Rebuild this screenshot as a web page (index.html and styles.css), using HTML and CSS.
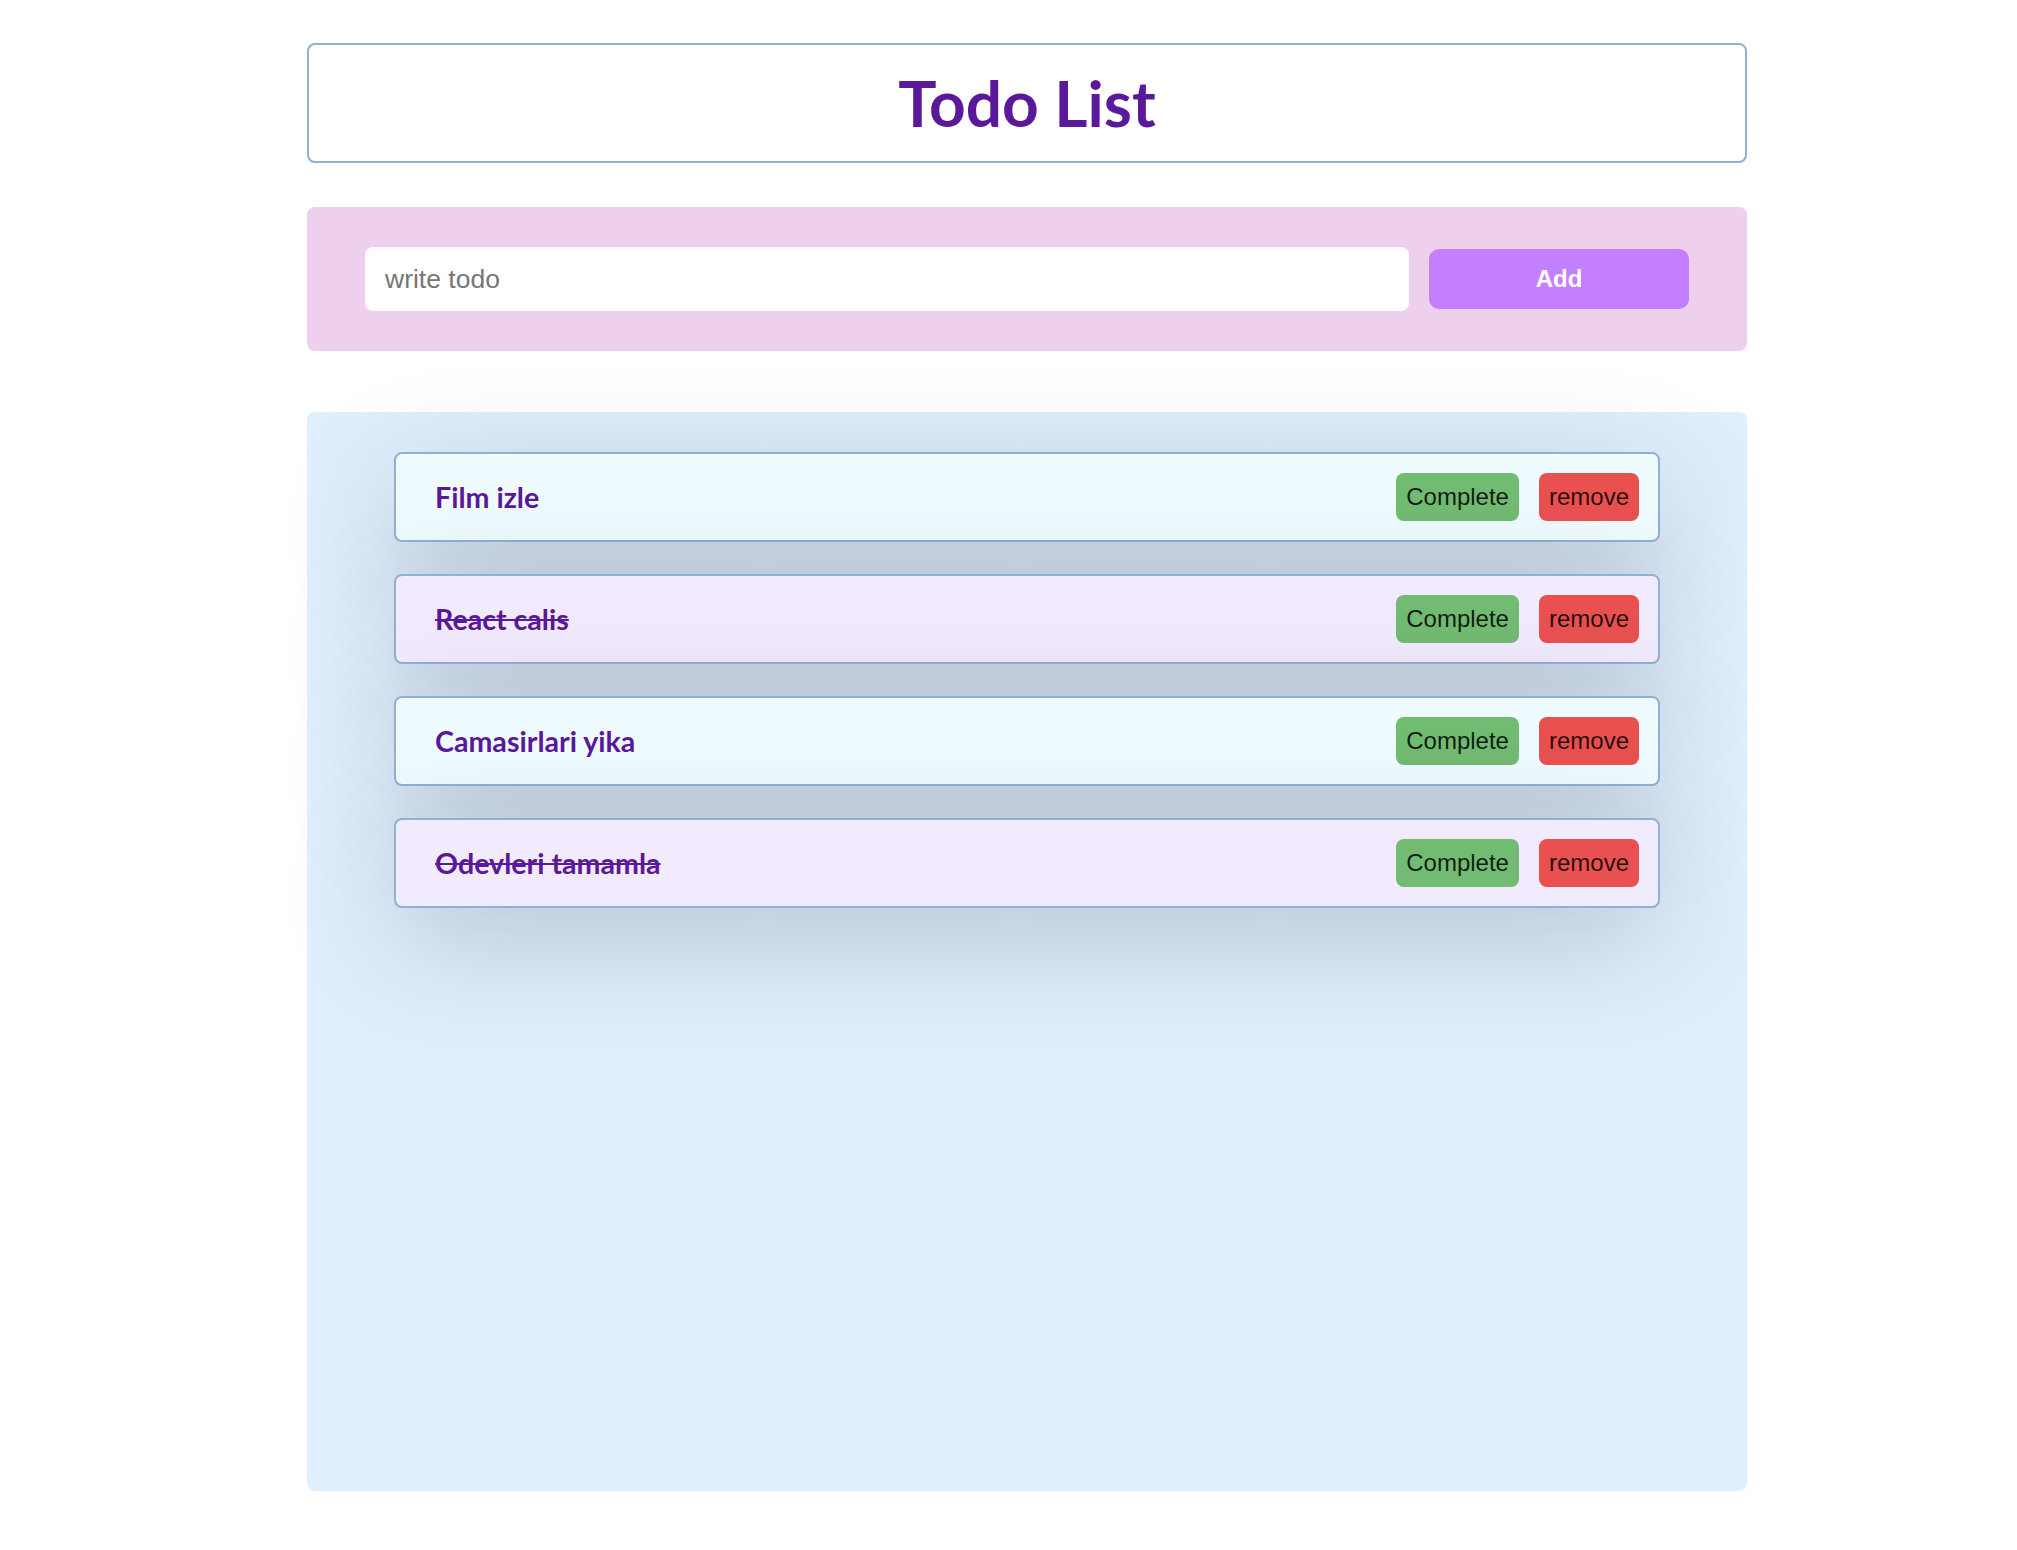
FILE: index.html
```html
<!DOCTYPE html>
<html lang="en">
<head>
<meta charset="utf-8">
<title>Todo List</title>
<link rel="stylesheet" href="styles.css">
</head>
<body>
<div class="app">
  <header class="title-box">
    <h1 class="title">Todo List</h1>
  </header>
  <form class="add-form">
    <input class="todo-input" type="text" placeholder="write todo">
    <button class="add-btn" type="button">Add</button>
  </form>
  <section class="list-box">
    <ul class="todo-list">
      <li class="todo-item">
        <span class="todo-text">Film izle</span>
        <button class="btn btn-complete" type="button">Complete</button>
        <button class="btn btn-remove" type="button">remove</button>
      </li>
      <li class="todo-item done">
        <span class="todo-text">React calis</span>
        <button class="btn btn-complete" type="button">Complete</button>
        <button class="btn btn-remove" type="button">remove</button>
      </li>
      <li class="todo-item">
        <span class="todo-text">Camasirlari yika</span>
        <button class="btn btn-complete" type="button">Complete</button>
        <button class="btn btn-remove" type="button">remove</button>
      </li>
      <li class="todo-item done">
        <span class="todo-text">Odevleri tamamla</span>
        <button class="btn btn-complete" type="button">Complete</button>
        <button class="btn btn-remove" type="button">remove</button>
      </li>
    </ul>
  </section>
</div>
</body>
</html>
```

FILE: styles.css
```css
body {
  margin: 0;
  background: #ffffff;
  font-family: "Liberation Sans", Arial, sans-serif;
}

.app {
  width: 1440px;
  margin: 43px 0 0 307px;
}

.title-box {
  height: 120px;
  box-sizing: border-box;
  border: 2px solid #8fb1d3;
  border-radius: 8px;
  display: flex;
  align-items: center;
  justify-content: center;
}

.title {
  margin: 0;
  font-family: Lato, sans-serif;
  font-weight: 700;
  font-size: 64px;
  line-height: 1;
  color: #5a189a;
}

.add-form {
  margin: 44px 0 0;
  background: #eecfed;
  border-radius: 8px;
  padding: 40px 57px 40px 58px;
  display: flex;
  align-items: center;
  gap: 20px;
}

.todo-input {
  flex: 1;
  height: 64px;
  box-sizing: border-box;
  border: none;
  border-radius: 8px;
  padding: 0 20px;
  font-family: "Liberation Sans", Arial, sans-serif;
  font-size: 26.5px;
  color: #333;
  background: #ffffff;
  outline: none;
}

.todo-input::placeholder {
  color: #767676;
}

.add-btn {
  width: 260px;
  height: 60px;
  margin-right: 1px;
  border: none;
  border-radius: 10px;
  background: #c47fff;
  color: #ffffff;
  font-family: "Liberation Sans", Arial, sans-serif;
  font-weight: 700;
  font-size: 24px;
}

.list-box {
  margin-top: 61px;
  height: 1079px;
  box-sizing: border-box;
  background: #e0effe;
  border-radius: 8px;
  padding-top: 40px;
}

.todo-list {
  list-style: none;
  margin: 0 auto;
  padding: 0;
  width: 1266px;
  display: flex;
  flex-direction: column;
  gap: 32px;
}

.todo-item {
  height: 90px;
  box-sizing: border-box;
  border: 2px solid #8fb1d3;
  border-radius: 8px;
  background: #f0fbff;
  display: flex;
  align-items: center;
  padding: 0 19px 0 39px;
  box-shadow: 0 30px 120px rgba(0, 0, 0, 0.2);
}

.todo-item.done {
  background: #f2ebfd;
}

.todo-text {
  flex: 1;
  font-family: Lato, sans-serif;
  font-weight: 700;
  font-size: 28.6px;
  color: #5a189a;
}

.done .todo-text {
  text-decoration: line-through;
}

.btn {
  border: none;
  border-radius: 8px;
  padding: 10px;
  font-family: "Liberation Sans", Arial, sans-serif;
  font-size: 24px;
  line-height: 28px;
  color: rgba(0, 0, 0, 0.85);
}

.btn-complete {
  background: #72bb72;
}

.btn-remove {
  background: #e95151;
  margin-left: 20px;
}
```
